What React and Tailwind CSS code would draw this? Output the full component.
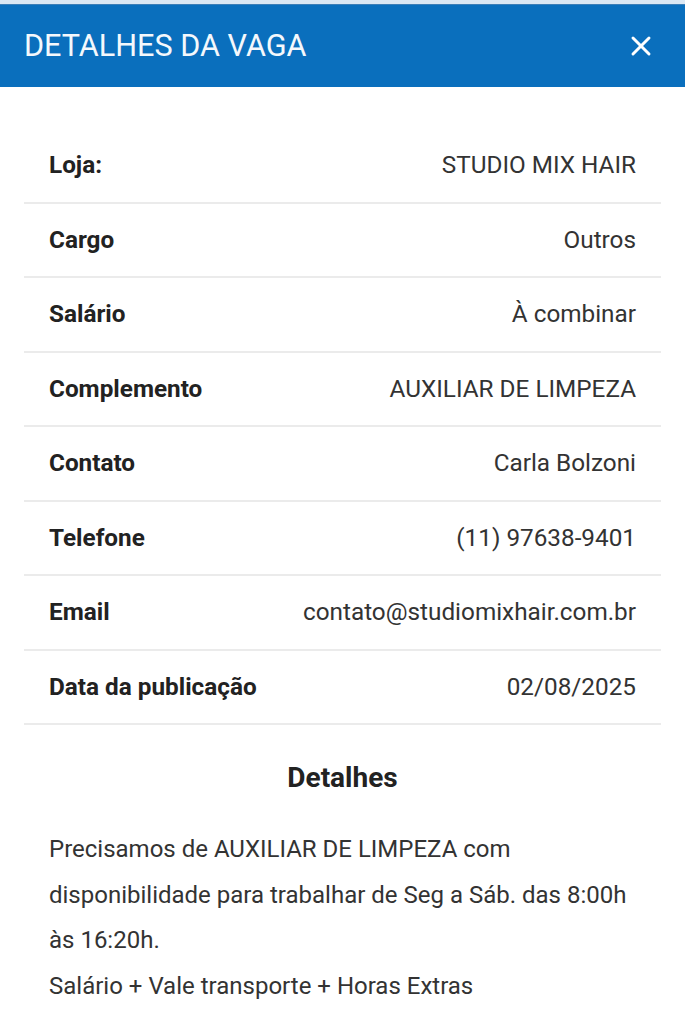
import { X } from 'lucide-react'

const rows = [
  { label: 'Loja:', value: 'STUDIO MIX HAIR' },
  { label: 'Cargo', value: 'Outros' },
  { label: 'Salário', value: 'À combinar' },
  { label: 'Complemento', value: 'AUXILIAR DE LIMPEZA' },
  { label: 'Contato', value: 'Carla Bolzoni' },
  { label: 'Telefone', value: '(11) 97638-9401' },
  { label: 'Email', value: 'contato@studiomixhair.com.br' },
  { label: 'Data da publicação', value: '02/08/2025' },
]

function App() {
  return (
    <div className="min-h-screen bg-white" style={{ fontFamily: 'Roboto, "Noto Sans", sans-serif' }}>
      <div className="h-[4px] bg-[#dbe8f4]" />
      {/* Header */}
      <div className="h-[83px] bg-[#0a6fbd] flex items-center justify-between pl-[24px] pr-[28px] border-t border-[#3d7fb8]">
        <h1 className="text-[30.6px] text-[#f4f8fc]">DETALHES DA VAGA</h1>
        <X className="w-[32px] h-[32px] text-white" strokeWidth={2.2} />
      </div>

      <div className="px-[24px] pt-[42px]">
        {rows.map(row => (
          <div
            key={row.label}
            className="flex items-center justify-between h-[74.5px] px-[25px] border-b-2 border-[#ebebeb]"
          >
            <span className="text-[24.3px] font-bold text-[#222]">{row.label}</span>
            <span className="text-[24.3px] text-[#333]">{row.value}</span>
          </div>
        ))}

        <h2 className="text-center text-[28px] font-bold text-[#222] mt-[32px]">Detalhes</h2>

        <div className="px-[25px] mt-[28px] text-[24px] leading-[45.6px] text-[#333]">
          <p>Precisamos de AUXILIAR DE LIMPEZA com disponibilidade para trabalhar de Seg a Sáb. das 8:00h às 16:20h.</p>
          <p>Salário + Vale transporte + Horas Extras</p>
        </div>
      </div>
    </div>
  )
}

export default App
